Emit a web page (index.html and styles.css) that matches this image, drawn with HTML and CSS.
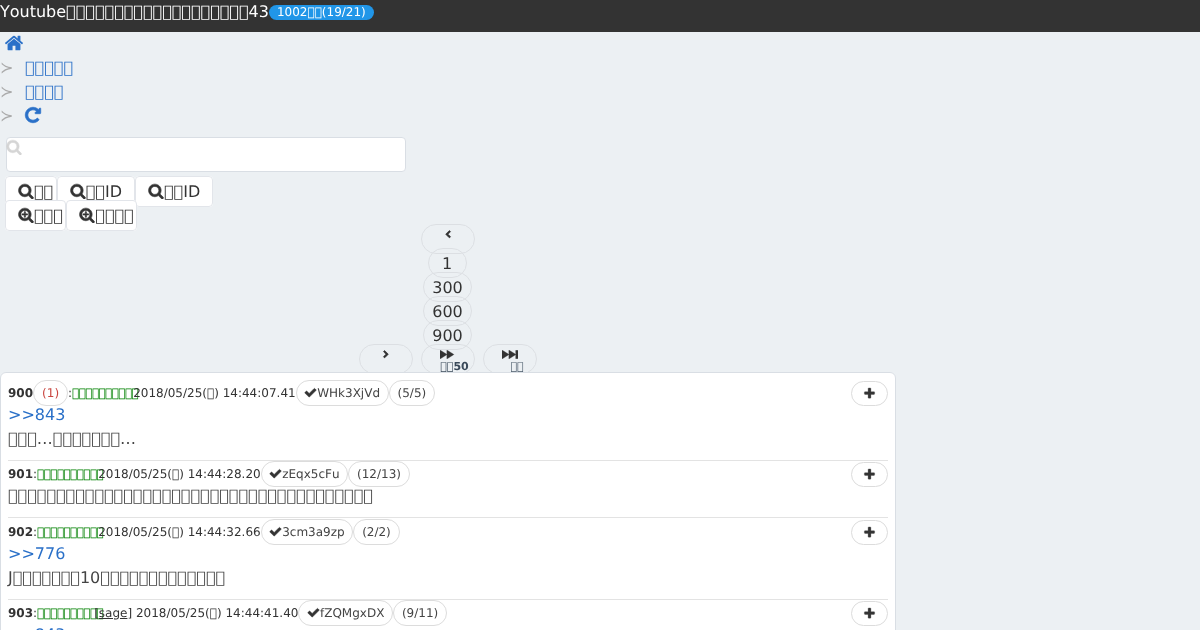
FILE: index.html
```html
<!DOCTYPE html>
<html lang="ja">
<head>
<meta charset="utf-8">
<title>Youtube</title>
<link rel="stylesheet" href="styles.css">
</head>
<body>
<svg class="sprite" xmlns="http://www.w3.org/2000/svg">
  <symbol id="i-search" viewBox="0 0 1792 1792"><path d="M1216 832q0-185-131.500-316.500t-316.500-131.500-316.500 131.500-131.500 316.500 131.500 316.500 316.500 131.500 316.500-131.500 131.500-316.500zm512 832q0 52-38 90t-90 38q-54 0-90-38l-343-342q-179 124-399 124-143 0-273.500-55.500t-225-150-150-225-55.500-273.500 55.500-273.500 150-225 225-150 273.500-55.500 273.500 55.500 225 150 150 225 55.500 273.500q0 220-124 399l343 343q37 37 37 90z"/></symbol>
  <symbol id="i-search-plus" viewBox="0 0 1792 1792"><path d="M1088 800v64q0 13-9.500 22.500t-22.500 9.500h-224v224q0 13-9.500 22.500t-22.500 9.500h-64q-13 0-22.500-9.500t-9.500-22.500v-224h-224q-13 0-22.500-9.500t-9.500-22.500v-64q0-13 9.500-22.500t22.500-9.500h224v-224q0-13 9.500-22.500t22.500-9.500h64q13 0 22.500 9.500t9.500 22.500v224h224q13 0 22.500 9.500t9.500 22.500zm128 32q0-185-131.500-316.500t-316.500-131.500-316.500 131.500-131.500 316.500 131.500 316.500 316.500 131.500 316.500-131.500 131.500-316.500zm512 832q0 53-37.500 90.500t-90.500 37.500q-54 0-90-38l-343-342q-179 124-399 124-143 0-273.500-55.500t-225-150-150-225-55.500-273.500 55.500-273.500 150-225 225-150 273.500-55.500 273.500 55.500 225 150 150 225 55.500 273.500q0 220-124 399l343 343q37 37 37 90z"/></symbol>
  <symbol id="i-check" viewBox="0 0 1792 1792"><path d="M1671 566q0 40-28 68l-724 724-136 136q-28 28-68 28t-68-28l-136-136-362-362q-28-28-28-68t28-68l136-136q28-28 68-28t68 28l294 295 656-657q28-28 68-28t68 28l136 136q28 28 28 68z"/></symbol>
  <symbol id="i-plus" viewBox="0 0 1792 1792"><path d="M1600 736v192q0 40-28 68t-68 28h-416v416q0 40-28 68t-68 28h-192q-40 0-68-28t-28-68v-416h-416q-40 0-68-28t-28-68v-192q0-40 28-68t68-28h416v-416q0-40 28-68t68-28h192q40 0 68 28t28 68v416h416q40 0 68 28t28 68z"/></symbol>
  <symbol id="i-home" viewBox="0 0 1792 1792"><path d="M1472 992v480q0 26-19 45t-45 19h-384v-384h-256v384h-384q-26 0-45-19t-19-45v-480q0-1 .5-3t.5-3l575-474 575 474q1 2 1 6zm223-69l-62 74q-8 9-21 11h-3q-13 0-21-7l-692-577-692 577q-12 8-24 7-13-2-21-11l-62-74q-8-10-7-23.500t11-21.500l719-599q32-26 76-26t76 26l244 204v-195q0-14 9-23t23-9h192q14 0 23 9t9 23v408l219 182q10 8 11 21.500t-7 23.500z"/></symbol>
  <symbol id="i-repeat" viewBox="0 0 1792 1792"><path d="M1664 256v448q0 26-19 45t-45 19h-448q-42 0-59-40-17-39 14-69l138-138q-148-137-349-137-104 0-198.500 40.500t-163.500 109.500-109.500 163.500-40.500 198.500 40.500 198.500 109.500 163.500 163.500 109.500 198.500 40.500q119 0 225-52t179-147q7-10 23-12 15 0 25 9l137 138q9 8 9.500 20.500t-7.500 22.500q-109 132-264 204.500t-327 72.500q-156 0-298-61t-245-164-164-245-61-298 61-298 164-245 245-164 298-61q147 0 284.500 55.500t244.500 156.500l130-129q29-31 70-14 39 17 39 59z"/></symbol>
  <symbol id="i-left" viewBox="0 0 1792 1792"><path d="M1427 301l-531 531 531 531q19 19 19 45t-19 45l-166 166q-19 19-45 19t-45-19l-742-742q-19-19-19-45t19-45l742-742q19-19 45-19t45 19l166 166q19 19 19 45t-19 45z"/></symbol>
  <symbol id="i-right" viewBox="0 0 1792 1792"><path d="M1363 877l-742 742q-19 19-45 19t-45-19l-166-166q-19-19-19-45t19-45l531-531-531-531q-19-19-19-45t19-45l166-166q19-19 45-19t45 19l742 742q19 19 19 45t-19 45z"/></symbol>
  <symbol id="i-forward" viewBox="0 100 1792 1592" preserveAspectRatio="none"><path d="M45 1651q-19 19-32 13t-13-32v-1472q0-26 13-32t32 13l710 710q9 9 13 19v-710q0-26 13-32t32 13l710 710q19 19 19 45t-19 45l-710 710q-19 19-32 13t-13-32v-710q-4 10-13 19z"/></symbol>
  <symbol id="i-end" viewBox="0 100 1792 1592" preserveAspectRatio="none"><path d="M45 1651q-19 19-32 13t-13-32v-1472q0-26 13-32t32 13l710 710q9 9 13 19v-710q0-26 13-32t32 13l710 710q9 9 13 19v-678q0-26 19-45t45-19h128q26 0 45 19t19 45v1408q0 26-19 45t-45 19h-128q-26 0-45-19t-19-45v-678q-4 10-13 19l-710 710q-19 19-32 13t-13-32v-710q-4 10-13 19z"/></symbol>
</svg>

<div class="page">
<header class="topbar">
  <span>Youtube&#xE000;&#xE000;&#xE000;&#xE000;&#xE000;&#xE000;&#xE000;&#xE000;&#xE000;&#xE000;&#xE000;&#xE000;&#xE000;&#xE000;&#xE000;&#xE000;&#xE000;&#xE000;&#xE000;43</span>
  <span class="badge">1002&#xE000;&#xE000;(19/21)</span>
</header>

<ol class="crumbs">
  <li class="crumb crumb-home"><a href="#"><svg class="icon icon-home"><use href="#i-home"/></svg></a></li>
  <li class="crumb"><span class="sep">≻</span><a href="#">&#xE000;&#xE000;&#xE000;&#xE000;&#xE000;</a></li>
  <li class="crumb"><span class="sep">≻</span><a href="#">&#xE000;&#xE000;&#xE000;&#xE000;</a></li>
  <li class="crumb"><span class="sep">≻</span><a href="#"><svg class="icon icon-repeat"><use href="#i-repeat"/></svg></a></li>
</ol>

<form class="search">
  <div class="search-field">
    <svg class="icon search-glyph"><use href="#i-search"/></svg>
    <input class="search-input" type="text" aria-label="search">
  </div>
  <div class="search-buttons"><a class="btn btn-tight" href="#"><svg class="icon icon-btn"><use href="#i-search"/></svg>&#xE000;&#xE000;</a><a class="btn" href="#"><svg class="icon icon-btn"><use href="#i-search"/></svg>&#xE000;&#xE000;ID</a><a class="btn" href="#"><svg class="icon icon-btn"><use href="#i-search"/></svg>&#xE000;&#xE000;ID</a><br><a class="btn btn-tight" href="#"><svg class="icon icon-btn"><use href="#i-search-plus"/></svg>&#xE000;&#xE000;&#xE000;</a><a class="btn btn-tight" href="#"><svg class="icon icon-btn"><use href="#i-search-plus"/></svg>&#xE000;&#xE000;&#xE000;&#xE000;</a></div>
</form>

<nav class="pager">
  <div class="pager-row"><a class="pill pill-icon" href="#"><svg class="icon icon-chev"><use href="#i-left"/></svg></a></div>
  <div class="pager-row"><a class="pill pill-one" href="#">1</a></div>
  <div class="pager-row"><a class="pill pill-num" href="#">300</a></div>
  <div class="pager-row"><a class="pill pill-num" href="#">600</a></div>
  <div class="pager-row"><a class="pill pill-num" href="#">900</a></div>
  <div class="pager-row">
    <a class="pill pill-icon" href="#"><svg class="icon icon-chev"><use href="#i-right"/></svg></a>
    <a class="pill pill-icon" href="#"><svg class="icon icon-ff"><use href="#i-forward"/></svg><span class="pill-label pill-label-strong">&#xE000;&#xE000;50</span></a>
    <a class="pill pill-icon" href="#"><svg class="icon icon-ff"><use href="#i-end"/></svg><span class="pill-label pill-label-end">&#xE000;&#xE000;</span></a>
  </div>
</nav>

<main class="card">
  <article class="post">
    <a class="add" href="#"><svg class="icon icon-plus"><use href="#i-plus"/></svg></a>
    <div class="meta"><b>900</b><a class="tag tag-red" href="#">(1)</a>:<span class="name">&#xE000;&#xE000;&#xE000;&#xE000;&#xE000;&#xE000;&#xE000;&#xE000;&#xE000;&#xE000;</span>2018/05/25(&#xE000;) 14:44:07.41<a class="tag tag-id" href="#"><svg class="icon icon-check"><use href="#i-check"/></svg>WHk3XjVd</a><a class="tag" href="#">(5/5)</a></div>
    <p class="text"><a href="#">&gt;&gt;843</a></p>
    <p class="text">&#xE000;&#xE000;&#xE000;…&#xE000;&#xE000;&#xE000;&#xE000;&#xE000;&#xE000;&#xE000;…</p>
  </article>
  <article class="post">
    <a class="add" href="#"><svg class="icon icon-plus"><use href="#i-plus"/></svg></a>
    <div class="meta"><b>901</b>:<span class="name">&#xE000;&#xE000;&#xE000;&#xE000;&#xE000;&#xE000;&#xE000;&#xE000;&#xE000;&#xE000;</span>2018/05/25(&#xE000;) 14:44:28.20<a class="tag tag-id" href="#"><svg class="icon icon-check"><use href="#i-check"/></svg>zEqx5cFu</a><a class="tag" href="#">(12/13)</a></div>
    <p class="text">&#xE000;&#xE000;&#xE000;&#xE000;&#xE000;&#xE000;&#xE000;&#xE000;&#xE000;&#xE000;&#xE000;&#xE000;&#xE000;&#xE000;&#xE000;&#xE000;&#xE000;&#xE000;&#xE000;&#xE000;&#xE000;&#xE000;&#xE000;&#xE000;&#xE000;&#xE000;&#xE000;&#xE000;&#xE000;&#xE000;&#xE000;&#xE000;&#xE000;&#xE000;&#xE000;&#xE000;&#xE000;&#xE000;</p>
  </article>
  <article class="post">
    <a class="add" href="#"><svg class="icon icon-plus"><use href="#i-plus"/></svg></a>
    <div class="meta"><b>902</b>:<span class="name">&#xE000;&#xE000;&#xE000;&#xE000;&#xE000;&#xE000;&#xE000;&#xE000;&#xE000;&#xE000;</span>2018/05/25(&#xE000;) 14:44:32.66<a class="tag tag-id" href="#"><svg class="icon icon-check"><use href="#i-check"/></svg>3cm3a9zp</a><a class="tag" href="#">(2/2)</a></div>
    <p class="text"><a href="#">&gt;&gt;776</a></p>
    <p class="text">J&#xE000;&#xE000;&#xE000;&#xE000;&#xE000;&#xE000;&#xE000;10&#xE000;&#xE000;&#xE000;&#xE000;&#xE000;&#xE000;&#xE000;&#xE000;&#xE000;&#xE000;&#xE000;&#xE000;&#xE000;</p>
  </article>
  <article class="post">
    <a class="add" href="#"><svg class="icon icon-plus"><use href="#i-plus"/></svg></a>
    <div class="meta"><b>903</b>:<span class="name name-sage">&#xE000;&#xE000;&#xE000;&#xE000;&#xE000;&#xE000;&#xE000;&#xE000;&#xE000;&#xE000;</span>[<a class="sage" href="#">sage</a>] 2018/05/25(&#xE000;) 14:44:41.40<a class="tag tag-id" href="#"><svg class="icon icon-check"><use href="#i-check"/></svg>fZQMgxDX</a><a class="tag" href="#">(9/11)</a></div>
    <p class="text"><a href="#">&gt;&gt;843</a></p>
  </article>
</main>
</div>
</body>
</html>
```

FILE: styles.css
```css
* { box-sizing: border-box; }
html, body { margin: 0; padding: 0; }
body {
  font-family: "DejaVu Sans", sans-serif;
  font-size: 16px;
  line-height: 24px;
  background: #ecf0f3;
  color: #333;
  height: 630px;
  overflow: hidden;
  text-rendering: geometricPrecision;
  font-kerning: none;
}
a { color: #2a70c8; text-decoration: none; }
.sprite { display: none; }
.icon { fill: currentColor; display: inline-block; }
.page { will-change: transform; }

.topbar {
  height: 32px;
  background: #333;
  color: #fff;
  display: flex;
  align-items: flex-start;
}
.badge {
  margin-top: 5px;
  height: 15px;
  padding: 0 8px;
  border-radius: 8px;
  background: #2196e8;
  font-size: 12px;
  line-height: 15px;
}

.crumbs { list-style: none; margin: 0; padding: 0; }
.crumb { height: 24px; display: flex; align-items: center; }
.sep { width: 25px; color: #aaa; flex: none; }
.crumb-home { padding-left: 4px; }
.icon-home { width: 20px; height: 20px; display: block; margin-top: -2px; }
.icon-repeat { width: 18px; height: 18px; display: block; margin-top: -2px; margin-left: -1px; stroke: currentColor; stroke-width: 70; }

.search { padding-top: 9px; }
.search-field { position: relative; width: 400px; margin-left: 6px; }
.search-input {
  display: block;
  width: 400px;
  height: 35px;
  border: 1px solid #d9dee4;
  border-radius: 4px;
  background: #fff;
}
.search-glyph { position: absolute; left: 0; top: 2px; width: 16px; height: 16px; color: #d5d5d5; stroke: currentColor; stroke-width: 60; }
.search-buttons { margin-top: 8px; padding-left: 5px; }
.btn {
  padding: 5px 12px;
  background: #fff;
  border: 1px solid #e2e5ea;
  border-radius: 4px;
  color: #333;
}
.btn-tight { padding-right: 2.5px; }
.icon-btn { width: 16px; height: 16px; vertical-align: -2px; color: #333; stroke: currentColor; stroke-width: 70; }

.pager { width: 896px; margin-top: -1px; }
.pager-row { height: 24px; display: flex; justify-content: center; align-items: center; gap: 8px; }
.pill {
  height: 30px;
  flex: none;
  border: 1px solid #dcdfe3;
  border-radius: 15px;
  color: #333;
  text-align: center;
  line-height: 30px;
}
.pill-one { width: 39px; margin-left: -2px; }
.pill-num { width: 49px; margin-left: -1px; }
.pill-icon {
  width: 54px;
  display: flex;
  flex-direction: column;
  align-items: center;
  padding-top: 5px;
}
.icon-chev { width: 8px; height: 9px; display: block; color: #333; stroke: currentColor; stroke-width: 160; }
.icon-ff { width: 16px; height: 11px; display: block; color: #333; stroke: currentColor; stroke-width: 40; }
.pill-label { font-size: 11px; line-height: 13px; margin-top: 1px; color: #4a5a6a; white-space: nowrap; }
.pill-label-strong { font-weight: bold; color: #3a4a5a; margin-left: 13px; }
.pill-label-end { margin-left: 14px; }

.card {
  width: 896px;
  margin-top: 1px;
  padding: 6px 7px 0;
  background: #fff;
  border: 1px solid #d9dee4;
  border-radius: 6px;
  position: relative;
}
.post { border-bottom: 1px solid #e3e3e3; padding: 4.5px 0 9px; }
.add {
  float: right;
  width: 37px;
  height: 25px;
  margin-top: -3px;
  border: 1px solid #dcdcdc;
  border-radius: 13px;
  background: #fff;
  color: #333;
  display: flex;
  align-items: center;
  justify-content: center;
}
.icon-plus { width: 13px; height: 13px; display: block; stroke: currentColor; stroke-width: 40; }
.meta { font-size: 12px; line-height: 19px; color: #333; white-space: nowrap; }
.name { color: #008000; letter-spacing: -0.6px; margin-right: -5px; }
.name-sage { margin-right: -9px; }
.tag {
  padding: 5px 8px;
  background: #fff;
  border: 1px solid #dcdcdc;
  border-radius: 13px;
  color: #444;
}
.tag-id { padding: 5px 7.5px; }
.tag-red { color: #c9453f; }
.sage { color: #333; text-decoration: underline; }
.icon-check { width: 13px; height: 13px; vertical-align: -2px; color: #333; stroke: currentColor; stroke-width: 60; }
.text { margin: 0; color: #444; }
```
